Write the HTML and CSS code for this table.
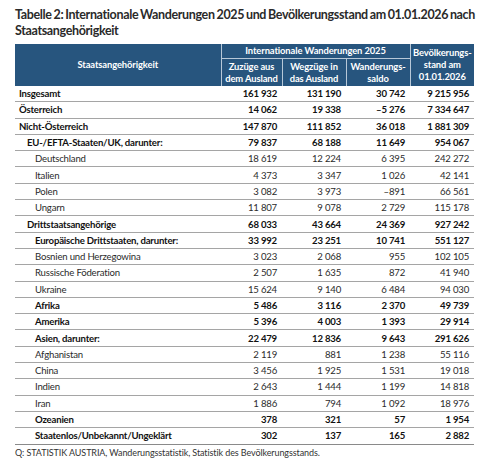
FILE: index.html
```html
<!DOCTYPE html>
<html lang="de">
<head>
<meta charset="UTF-8">
<meta name="viewport" content="width=device-width, initial-scale=1.0">
<title>Tabelle 2: Internationale Wanderungen 2025</title>
<link rel="stylesheet" href="styles.css">
</head>
<body>
    <div class="page">
        <h1 class="title">Tabelle 2: Internationale Wanderungen 2025 und Bevölkerungsstand am 01.01.2026 nach Staatsangehörigkeit</h1>

        <table class="stats">
            <colgroup>
                <col class="c-name">
                <col class="c-num">
                <col class="c-num2">
                <col class="c-num2">
                <col class="c-num2">
            </colgroup>
            <thead>
                <tr class="h1">
                    <th rowspan="2" class="h-name">Staatsangehörigkeit</th>
                    <th colspan="3" class="h-group">Internationale Wanderungen 2025</th>
                    <th rowspan="2" class="h-last">Bevölkerungs-<br>stand am<br>01.01.2026</th>
                </tr>
                <tr class="h2">
                    <th>Zuzüge aus<br>dem Ausland</th>
                    <th>Wegzüge in<br>das Ausland</th>
                    <th>Wanderungs-<br>saldo</th>
                </tr>
            </thead>
            <tbody>
                <tr class="b"><td class="l0">Insgesamt</td><td>161 932</td><td>131 190</td><td>30 742</td><td>9 215 956</td></tr>
                <tr class="b"><td class="l0">Österreich</td><td>14 062</td><td>19 338</td><td>–5 276</td><td>7 334 647</td></tr>
                <tr class="b"><td class="l0">Nicht-Österreich</td><td>147 870</td><td>111 852</td><td>36 018</td><td>1 881 309</td></tr>
                <tr class="b"><td class="l1">EU-/EFTA-Staaten/UK, darunter:</td><td>79 837</td><td>68 188</td><td>11 649</td><td>954 067</td></tr>
                <tr><td class="l2">Deutschland</td><td>18 619</td><td>12 224</td><td>6 395</td><td>242 272</td></tr>
                <tr><td class="l2">Italien</td><td>4 373</td><td>3 347</td><td>1 026</td><td>42 141</td></tr>
                <tr><td class="l2">Polen</td><td>3 082</td><td>3 973</td><td>–891</td><td>66 561</td></tr>
                <tr><td class="l2">Ungarn</td><td>11 807</td><td>9 078</td><td>2 729</td><td>115 178</td></tr>
                <tr class="b"><td class="l1">Drittstaatsangehörige</td><td>68 033</td><td>43 664</td><td>24 369</td><td>927 242</td></tr>
                <tr class="b"><td class="l2">Europäische Drittstaaten, darunter:</td><td>33 992</td><td>23 251</td><td>10 741</td><td>551 127</td></tr>
                <tr><td class="l2">Bosnien und Herzegowina</td><td>3 023</td><td>2 068</td><td>955</td><td>102 105</td></tr>
                <tr><td class="l2">Russische Föderation</td><td>2 507</td><td>1 635</td><td>872</td><td>41 940</td></tr>
                <tr><td class="l2">Ukraine</td><td>15 624</td><td>9 140</td><td>6 484</td><td>94 030</td></tr>
                <tr class="b"><td class="l2">Afrika</td><td>5 486</td><td>3 116</td><td>2 370</td><td>49 739</td></tr>
                <tr class="b"><td class="l2">Amerika</td><td>5 396</td><td>4 003</td><td>1 393</td><td>29 914</td></tr>
                <tr class="b"><td class="l2">Asien, darunter:</td><td>22 479</td><td>12 836</td><td>9 643</td><td>291 626</td></tr>
                <tr><td class="l2">Afghanistan</td><td>2 119</td><td>881</td><td>1 238</td><td>55 116</td></tr>
                <tr><td class="l2">China</td><td>3 456</td><td>1 925</td><td>1 531</td><td>19 018</td></tr>
                <tr><td class="l2">Indien</td><td>2 643</td><td>1 444</td><td>1 199</td><td>14 818</td></tr>
                <tr><td class="l2">Iran</td><td>1 886</td><td>794</td><td>1 092</td><td>18 976</td></tr>
                <tr class="b"><td class="l2">Ozeanien</td><td>378</td><td>321</td><td>57</td><td>1 954</td></tr>
                <tr class="b last"><td class="l2">Staatenlos/Unbekannt/Ungeklärt</td><td>302</td><td>137</td><td>165</td><td>2 882</td></tr>
            </tbody>
        </table>

        <p class="source">Q: STATISTIK AUSTRIA, Wanderungsstatistik, Statistik des Bevölkerungsstands.</p>
    </div>
</body>
</html>
```

FILE: styles.css
```css
/* Tabelle Wanderungen */
body {
    margin: 0;
    background: #fff;
    font-family: Lato, "Open Sans", sans-serif;
    color: #1a1a1a;
}

.page {
    padding: 7px 16px 0 15px;
}

.title {
    margin: 0;
    font-size: 12.5px;
    line-height: 16px;
    font-weight: 700;
    text-align: justify;
    color: #2a2a2a;
    letter-spacing: -0.35px;
    word-spacing: -2px;
}

.stats {
    margin-top: 5px;
    width: 459px;
    border-collapse: collapse;
    table-layout: fixed;
    font-size: 9.6px;
}

.c-name { width: 206px; }
.c-num { width: 61px; }
.c-num2 { width: 64px; }

.stats thead th {
    background-color: #27557e;
    color: #fff;
    font-weight: 700;
    font-size: 9.4px;
    line-height: 12px;
    text-align: center;
    padding: 0 2px;
    border-left: 1px solid #b7c8d8;
    letter-spacing: -0.1px;
    word-spacing: 0;
}

.stats thead th.h-name {
    border-left: none;
}

.h1 th {
    height: 14px;
}

.h1 th.h-group {
    border-bottom: 1px solid #b7c8d8;
}

.h2 th {
    height: 27px;
    padding-top: 1px;
}

.stats tbody td {
    height: 15.3px;
    padding: 0 5px 0 0;
    text-align: right;
    border-bottom: 1px solid #a5a5a5;
    white-space: nowrap;
    color: #2b2b2b;
    letter-spacing: -0.2px;
}

.stats tbody td.l0 { padding-left: 4px; }
.stats tbody td.l1 { padding-left: 12px; }
.stats tbody td.l2 { padding-left: 20px; }

.stats tbody td:first-child {
    text-align: left;
}

.stats tbody tr.b td {
    font-weight: 700;
    color: #111;
}

.stats tbody tr.last td {
    border-bottom-color: #8a8a8a;
}

.source {
    margin: 2px 0 0;
    font-size: 9px;
    color: #333;
    letter-spacing: -0.1px;
}
```
